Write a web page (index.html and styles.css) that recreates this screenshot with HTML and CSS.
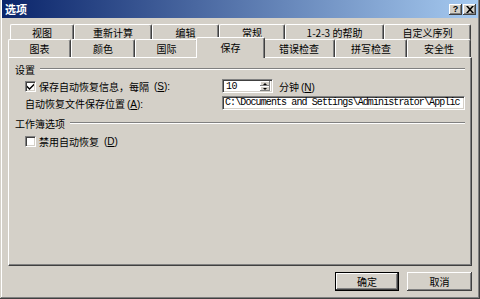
FILE: index.html
```html
<!DOCTYPE html>
<html lang="zh-CN">

<head>
    <meta charset="UTF-8">
    <title>选项</title>
    <link rel="stylesheet" href="styles.css">
</head>

<body>

    <div class="window">
        <div class="titlebar">
            <span class="title">选项</span>
            <div class="title-btns">
                <span class="tbtn">?</span>
                <span class="tbtn">
                    <svg width="8" height="7" viewBox="0 0 8 7"><path d="M0 0h2l2 2.2L6 0h2L5 3.5 8 7H6L4 4.8 2 7H0l3-3.5z" fill="#000"/></svg>
                </span>
            </div>
        </div>

        <div class="content">
            <div class="tabs">
                <div class="tab-row back">
                    <div class="tab">视图</div>
                    <div class="tab">重新计算</div>
                    <div class="tab">编辑</div>
                    <div class="tab">常规</div>
                    <div class="tab">1-2-3 的帮助</div>
                    <div class="tab">自定义序列</div>
                </div>
                <div class="tab-row front">
                    <div class="tab">图表</div>
                    <div class="tab">颜色</div>
                    <div class="tab">国际</div>
                    <div class="tab active">保存</div>
                    <div class="tab">错误检查</div>
                    <div class="tab">拼写检查</div>
                    <div class="tab">安全性</div>
                </div>
            </div>

            <div class="panel">
                <div class="group-head">
                    <span>设置</span>
                    <span class="rule"></span>
                </div>
                <div class="group-body">
                    <label class="check">
                        <span class="box checked">
                            <svg width="7" height="7" viewBox="0 0 7 7"><path d="M0 2.5l2.5 2.5L7 0.5v2L2.5 7 0 4.5z" fill="#000"/></svg>
                        </span>
                        保存自动恢复信息，每隔<span class="key">(<u>S</u>):</span>
                    </label>
                    <div class="field-line">
                        <div class="spin">
                            <span class="spin-value">10</span>
                            <span class="spin-btns">
                                <span class="arrow up"></span>
                                <span class="arrow down"></span>
                            </span>
                        </div>
                        <span>分钟<span class="key">(<u>N</u>)</span></span>
                    </div>

                    <span class="label">自动恢复文件保存位置<span class="key">(<u>A</u>):</span></span>
                    <div class="textbox">C:\Documents and Settings\Administrator\Applic</div>
                </div>

                <div class="group-head second">
                    <span>工作簿选项</span>
                    <span class="rule"></span>
                </div>
                <div class="group-body single">
                    <label class="check">
                        <span class="box"></span>
                        禁用自动恢复<span class="key">(<u>D</u>)</span>
                    </label>
                </div>
            </div>

            <div class="actions">
                <button class="btn default">确定</button>
                <button class="btn">取消</button>
            </div>
        </div>
    </div>

</body>

</html>
```

FILE: styles.css
```css
body {
    margin: 0;
    font-family: "Noto Sans CJK SC", "Liberation Sans", sans-serif;
    font-size: 10px;
    color: #000;
    background: #d4d0c8;
}

.window {
    width: 480px;
    height: 299px;
    box-sizing: border-box;
    background: #d4d0c8;
    box-shadow: inset -1px -1px #404040, inset 1px 0 #d4d0c8, inset -2px -2px #808080, inset 2px 0 #fff;
}

.titlebar {
    height: 18px;
    margin: 0 2px;
    padding: 0 2px 0 3px;
    display: flex;
    align-items: center;
    justify-content: space-between;
    background: linear-gradient(to right, #0a246a, #a6caf0);
}

.title {
    color: #fff;
    font-weight: bold;
    font-size: 11px;
}

.title-btns {
    display: flex;
    gap: 1px;
}

.tbtn {
    width: 13px;
    height: 11px;
    display: flex;
    align-items: center;
    justify-content: center;
    background: #d4d0c8;
    font-family: "Liberation Sans", sans-serif;
    font-weight: bold;
    font-size: 9px;
    line-height: 1;
    box-shadow: inset -1px -1px #404040, inset 1px 1px #fff, inset -2px -2px #808080;
}

.content {
    padding: 6px 8px 0 8px;
}

.tab-row {
    display: grid;
}

.tab-row.back {
    height: 15px;
    margin-left: 2px;
    grid-template-columns: 64px 78px 67px 66px 99px 87px;
}

.tab-row.front {
    height: 18px;
    grid-template-columns: 63px 64px 63px 65px 72px 72px 64px;
}

.tab {
    display: flex;
    align-items: center;
    justify-content: center;
    background: #d4d0c8;
    border-top: 1px solid #fff;
    border-left: 1px solid #fff;
    border-right: 1px solid #404040;
    border-radius: 2px 2px 0 0;
    box-shadow: inset -1px 0 #808080;
    white-space: nowrap;
}

.tab.active {
    position: relative;
    z-index: 1;
    margin: -2px -2px -1px -2px;
    padding-bottom: 1px;
}

.panel {
    height: 209px;
    box-sizing: border-box;
    padding: 4px 6px 0 6px;
    border-top: 1px solid #fff;
    border-left: 1px solid #fff;
    border-right: 1px solid #404040;
    border-bottom: 1px solid #404040;
    box-shadow: inset -1px -1px #808080;
}

.group-head {
    height: 14px;
    display: flex;
    align-items: center;
    gap: 5px;
}

.group-head.second {
    margin-top: 6px;
}

.rule {
    flex: 1;
    border-top: 1px solid #808080;
    border-bottom: 1px solid #fff;
}

.group-body {
    margin-top: 3px;
    padding-left: 10px;
    display: grid;
    grid-template-columns: 197px 1fr;
    grid-auto-rows: 14px;
    row-gap: 3px;
    align-items: center;
}

.group-body.single {
    margin-top: 4px;
    grid-template-columns: 1fr;
}

.check {
    display: flex;
    align-items: center;
    gap: 3px;
}

.box {
    width: 11px;
    height: 11px;
    box-sizing: border-box;
    display: flex;
    align-items: center;
    justify-content: center;
    background: #fff;
    border-top: 1px solid #808080;
    border-left: 1px solid #808080;
    border-right: 1px solid #fff;
    border-bottom: 1px solid #fff;
    box-shadow: inset 1px 1px #404040, inset -1px -1px #d4d0c8;
}

.key {
    margin-left: 2px;
    font-family: "Liberation Sans", sans-serif;
}

.field-line {
    display: flex;
    align-items: center;
    gap: 6px;
}

.spin,
.textbox {
    height: 14px;
    box-sizing: border-box;
    background: #fff;
    border-top: 1px solid #808080;
    border-left: 1px solid #808080;
    border-right: 1px solid #fff;
    border-bottom: 1px solid #fff;
    box-shadow: inset 1px 1px #404040, inset -1px -1px #d4d0c8;
}

.spin {
    width: 51px;
    display: flex;
    align-items: center;
    justify-content: space-between;
    padding: 2px 2px 2px 3px;
}

.spin-value {
    font-family: "Liberation Mono", monospace;
    font-size: 10px;
    letter-spacing: -0.5px;
}

.spin-btns {
    width: 10px;
    height: 10px;
    display: flex;
    flex-direction: column;
}

.arrow {
    flex: 1;
    display: flex;
    align-items: center;
    justify-content: center;
    background: #d4d0c8;
    box-shadow: inset -1px -1px #808080, inset 1px 1px #fff;
}

.arrow::after {
    content: "";
    border-left: 2px solid transparent;
    border-right: 2px solid transparent;
}

.arrow.up::after {
    border-bottom: 2px solid #000;
}

.arrow.down::after {
    border-top: 2px solid #000;
}

.textbox {
    padding: 0 2px;
    font-family: "Liberation Mono", monospace;
    font-size: 10px;
    letter-spacing: -0.9px;
    line-height: 12px;
    white-space: nowrap;
    overflow: hidden;
}

.actions {
    margin-top: 6px;
    display: flex;
    justify-content: flex-end;
    gap: 8px;
}

.btn {
    width: 65px;
    height: 19px;
    padding: 0;
    border: none;
    background: #d4d0c8;
    font-family: inherit;
    font-size: 10px;
    box-shadow: inset -1px -1px #404040, inset 1px 1px #fff, inset -2px -2px #808080;
}

.btn.default {
    width: 64px;
    border: 1px solid #000;
}
```
